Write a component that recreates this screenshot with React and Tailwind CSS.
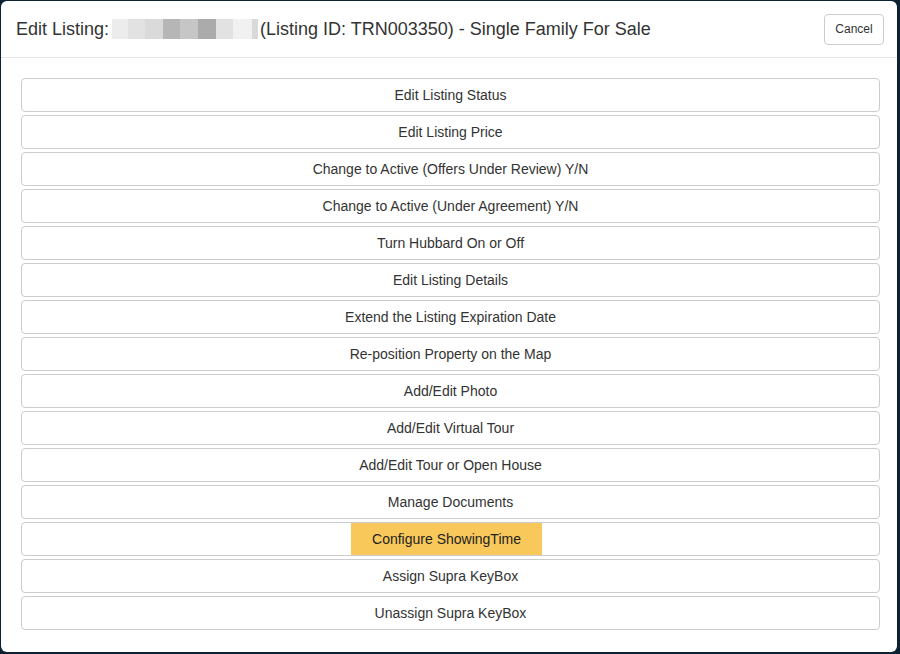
import React from "react";

const items = [
  "Edit Listing Status",
  "Edit Listing Price",
  "Change to Active (Offers Under Review) Y/N",
  "Change to Active (Under Agreement) Y/N",
  "Turn Hubbard On or Off",
  "Edit Listing Details",
  "Extend the Listing Expiration Date",
  "Re-position Property on the Map",
  "Add/Edit Photo",
  "Add/Edit Virtual Tour",
  "Add/Edit Tour or Open House",
  "Manage Documents",
  "Configure ShowingTime",
  "Assign Supra KeyBox",
  "Unassign Supra KeyBox",
];

const blur = [
  ["w-[16px]", "bg-[#ececec]"],
  ["w-[17px]", "bg-[#e2e2e2]"],
  ["w-[18px]", "bg-[#dadada]"],
  ["w-[17px]", "bg-[#b6b6b6]"],
  ["w-[18px]", "bg-[#c6c6c6]"],
  ["w-[18px]", "bg-[#ababab]"],
  ["w-[17px]", "bg-[#e2e2e2]"],
  ["w-[19px]", "bg-[#f1f1f1]"],
  ["w-[6px]", "bg-[#d9d9d9]"],
];

export default function App() {
  return (
    <div
      className="w-[900px] h-[654px] bg-[#0c2233] pl-px pt-px"
      style={{ fontFamily: '"Liberation Sans", Arial, sans-serif' }}
    >
      <div className="w-[896px] h-[651px] bg-white rounded-[6px] flex flex-col">
        <div className="h-[57px] border-b border-[#e5e5e5] flex items-center pl-[15px] pr-[13px]">
          <div className="flex items-center text-[18px] text-[#333] leading-none">
            <span>Edit Listing:</span>
            <span className="flex h-[20px] ml-[3px] mr-[2px]">
              {blur.map(([w, c], i) => (
                <span key={i} className={`${w} ${c} h-full`} />
              ))}
            </span>
            <span>(Listing ID: TRN003350) - Single Family For Sale</span>
          </div>
          <button className="ml-auto h-[31px] w-[60px] border border-[#ccc] rounded-[4px] text-[12px] text-[#333] bg-white">
            Cancel
          </button>
        </div>
        <div className="flex flex-col gap-[3px] pt-[20px] pl-[20px] pr-[17px]">
          {items.map((t) => (
            <div
              key={t}
              className="h-[34px] border border-[#ccc] rounded-[4px] flex items-center justify-center text-[14px] text-[#333]"
            >
              {t === "Configure ShowingTime" ? (
                <span className="h-[32px] bg-[#f9c85b] px-[21px] flex items-center text-[#222] -ml-[8px]">
                  {t}
                </span>
              ) : (
                t
              )}
            </div>
          ))}
        </div>
      </div>
    </div>
  );
}
